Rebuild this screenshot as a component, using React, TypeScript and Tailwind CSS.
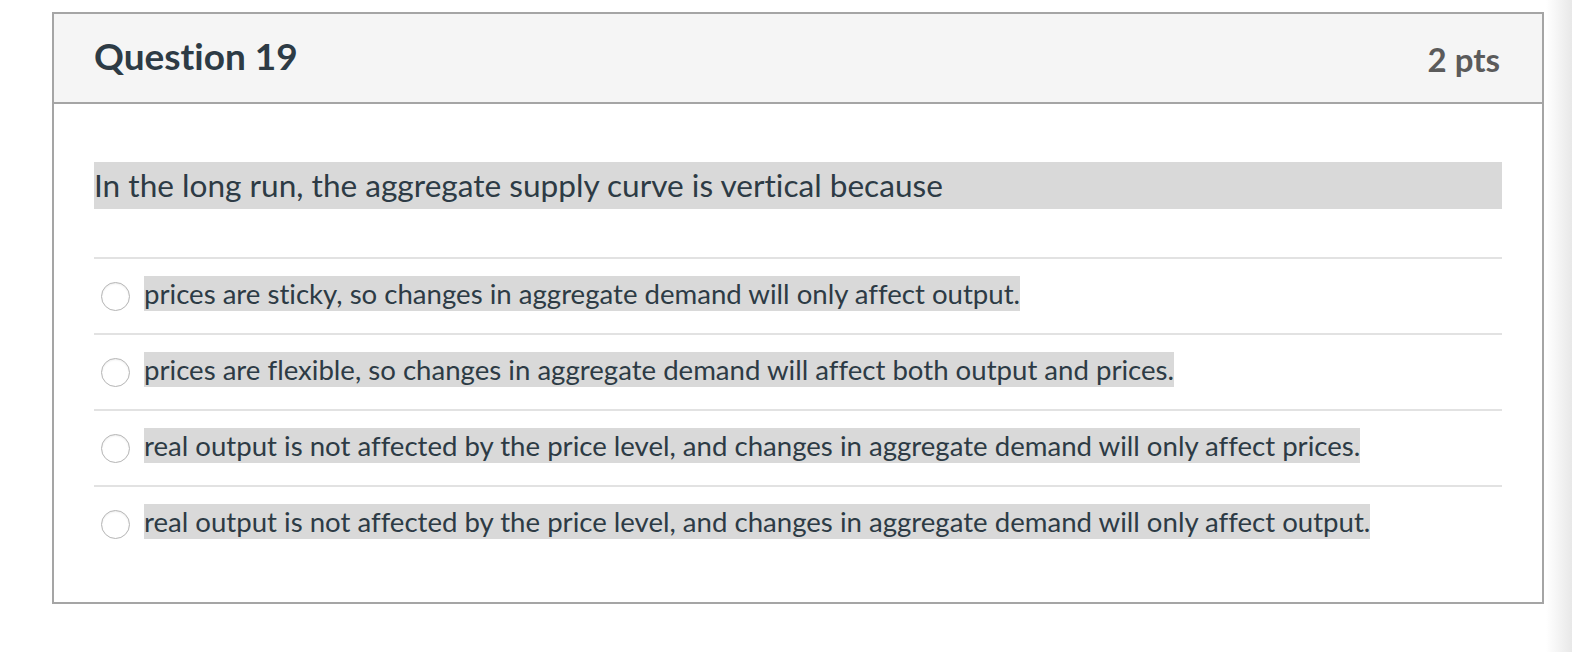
import React from "react";

const options = [
  "prices are sticky, so changes in aggregate demand will only affect output.",
  "prices are flexible, so changes in aggregate demand will affect both output and prices.",
  "real output is not affected by the price level, and changes in aggregate demand will only affect prices.",
  "real output is not affected by the price level, and changes in aggregate demand will only affect output.",
];

export default function App() {
  return (
    <div
      className="flex w-[1572px] h-[652px] bg-white overflow-hidden [font-variant-ligatures:none]"
      style={{ fontFamily: "Lato, 'Open Sans', sans-serif" }}
    >
      <div className="w-[1546px] shrink-0 pl-[52px] pt-[12px]">
        <div className="w-[1492px] border-2 border-[#a5a5a5] text-[#2d3b45]">
          <div className="h-[90px] bg-[#f5f5f5] border-b-2 border-[#a5a5a5] flex items-center justify-between pl-[40px] pr-[42px]">
            <span className="text-[37px] font-bold pb-[4px]">Question 19</span>
            <span className="text-[33px] font-bold text-[#5b5b5b] pt-[4px]">2 pts</span>
          </div>
          <div className="px-[40px] pt-[58px] pb-[41px]">
            <div className="bg-[#d9d9d9] h-[47px] flex items-center text-[31.6px] leading-[47px]">
              In the long run, the aggregate supply curve is vertical because
            </div>
            <div className="mt-[48px]">
              {options.map((o, i) => (
                <div
                  key={i}
                  className="h-[76px] flex items-center border-t-2 border-[#e2e2e2]"
                >
                  <div className="w-[29px] h-[29px] shrink-0 rounded-full border-[1.5px] border-[#b5b5b5] bg-white ml-[7px] mr-[14px] shadow-[inset_0_1px_2px_rgba(0,0,0,0.08)]" />
                  <span className="bg-[#d9d9d9] text-[27.6px] leading-[35px] inline-block mb-[6px]">{o}</span>
                </div>
              ))}
            </div>
          </div>
        </div>
      </div>
      <div className="flex-1 h-full bg-gradient-to-r from-[#ffffff] to-[#e8e8e8]" />
    </div>
  );
}
